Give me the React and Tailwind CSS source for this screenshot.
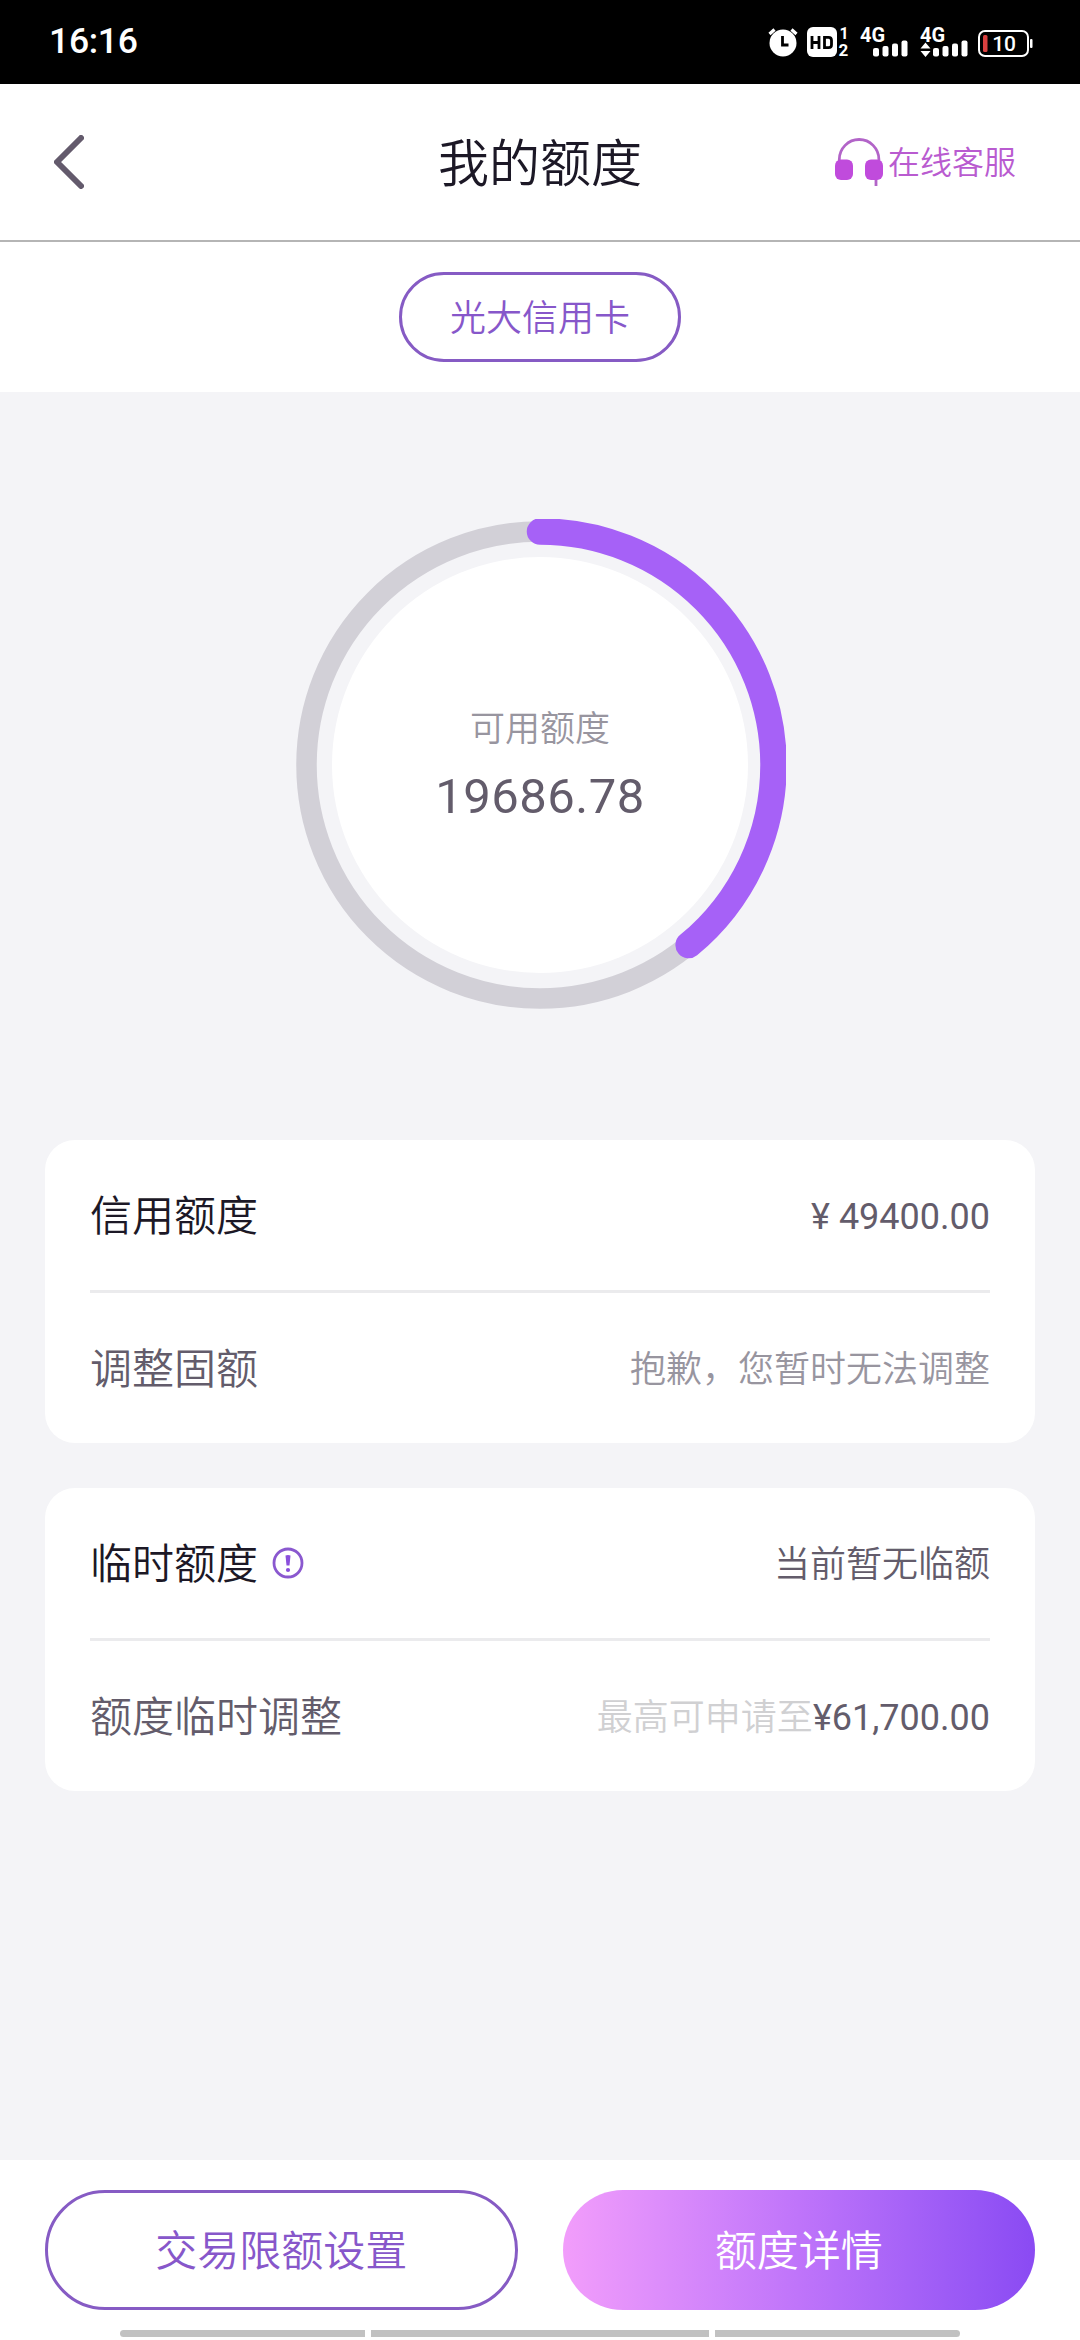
import clsx from "clsx";

function SignalBars() {
  return (
    <>
      <rect x="13" y="21" width="6" height="8.5" rx="2" />
      <rect x="22.5" y="19" width="6" height="10.5" rx="2" />
      <rect x="32" y="16.5" width="6" height="13" rx="2" />
      <rect x="41.5" y="13.5" width="6" height="16" rx="2" />
    </>
  );
}

function StatusBar() {
  return (
    <div className="flex h-[84px] items-center justify-between bg-black pr-[47px] pl-[49px] text-white">
      <span className="text-[35.5px] leading-none font-medium tracking-[-0.3px]">
        16:16
      </span>
      <div className="flex h-[30px] items-start">
        <svg width="30" height="30" viewBox="0 0 30 30" fill="none">
          <circle cx="15" cy="16" r="13.5" fill="#fff" />
          <path d="M1.5 7 6.500 2.500M28.5 7 23.500 2.500" stroke="#fff" strokeWidth="3.200" />
          <path d="M14.5 9v9h6" stroke="#000" strokeWidth="2.800" />
        </svg>
        <svg width="44" height="30" viewBox="0 0 44 30" className="ml-[9px] overflow-visible">
          <rect x="0" y="0" width="30" height="30" rx="6" fill="#fff" />
          <path
            d="M5 9v13M12 9v13M5 15.500h7M17.500 10.300h4q3 0 3 3v4.400q0 3-3 3h-4z"
            fill="none"
            stroke="#000"
            strokeWidth="2.800"
          />
          <text x="32.500" y="12" fontSize="16" fontWeight="700" fill="#fff">
            1
          </text>
          <text x="31.500" y="29" fontSize="17" fontWeight="700" fill="#fff">
            2
          </text>
        </svg>
        <svg
          width="48"
          height="30"
          viewBox="0 0 48 30"
          className="ml-[9px] overflow-visible"
          fill="#fff"
        >
          <text x="0" y="14.500" fontSize="20" fontWeight="700">
            4G
          </text>
          <SignalBars />
        </svg>
        <svg
          width="48"
          height="30"
          viewBox="0 0 48 30"
          className="ml-[12px] overflow-visible"
          fill="#fff"
        >
          <text x="0" y="14.500" fontSize="20" fontWeight="700">
            4G
          </text>
          <path d="M5.500 15.500 10.500 21.500H.500zM5.500 30 .500 24h10z" />
          <SignalBars />
        </svg>
        <svg width="55" height="30" viewBox="0 0 55 30" className="ml-[10px]">
          <rect x="1" y="4" width="49" height="25" rx="6" fill="none" stroke="#fff" strokeWidth="2" />
          <rect x="52" y="12" width="2.500" height="9" rx="1" fill="#fff" />
          <rect x="5" y="8" width="4.500" height="17" rx="1.500" fill="#d9403f" />
          <text x="14.200" y="24" fontSize="21" fontWeight="500" fill="#fff">
            10
          </text>
        </svg>
      </div>
    </div>
  );
}

function Header() {
  return (
    <header className="grid h-[158px] grid-cols-3 items-center border-b-2 border-[#b5b5b5] bg-white">
      <button type="button" className="ml-[54px] justify-self-start">
        <svg width="30" height="54" viewBox="0 0 30 54" fill="none">
          <path
            d="M27 3 3 27l24 24"
            stroke="#635a6c"
            strokeWidth="6"
            strokeLinecap="round"
            strokeLinejoin="round"
          />
        </svg>
      </button>
      <h1 className="pt-[4px] text-center text-[51px] leading-none font-[350] text-[#1c1826]">
        我的额度
      </h1>
      <button type="button" className="mr-[64px] flex items-center gap-[5px] justify-self-end">
        <svg width="48" height="48" viewBox="0 0 48 48">
          <path
            d="M4.300 24v-2.500a19.800 20 0 0 1 39.600 0V24M41 40v8"
            fill="none"
            stroke="#b264c8"
            strokeWidth="2.800"
          />
          <rect x="0" y="21.500" width="18" height="20.500" rx="6" fill="#c04bdc" />
          <rect x="30" y="21.500" width="18" height="20.500" rx="6" fill="#c04bdc" />
        </svg>
        <span className="pt-[2px] text-[32px] leading-none font-[350] text-[#b95bd0]">
          在线客服
        </span>
      </button>
    </header>
  );
}

function LimitRing() {
  const radius = 233.5;
  const length = 2 * Math.PI * radius;

  return (
    <div className="mt-[127px] grid place-items-center">
      <svg
        width="492"
        height="492"
        viewBox="0 0 492 492"
        fill="none"
        className="col-start-1 row-start-1"
      >
        <circle cx="246" cy="246" r="208" fill="#fff" />
        <circle cx="246" cy="246" r={radius} stroke="#d2d0d7" strokeWidth="20.500" />
        <circle
          cx="246"
          cy="246"
          r={radius}
          stroke="#a661f7"
          strokeWidth="26.500"
          strokeLinecap="round"
          strokeDasharray={`${length * 0.39} ${length}`}
          transform="rotate(-90 246 246)"
        />
      </svg>
      <div className="col-start-1 row-start-1 flex flex-col items-center pt-[6px]">
        <span className="text-[35px] leading-[50px] font-[350] text-[#98959f]">可用额度</span>
        <span className="mt-[8px] text-[49px] leading-[68px] tracking-[0.5px] text-[#635c6b]">
          19686.78
        </span>
      </div>
    </div>
  );
}

function Row({ label, muted, icon, children }) {
  return (
    <div className="flex h-[150px] items-center justify-between">
      <div className="flex items-center">
        <span
          className={clsx(
            "pt-[3px] text-[42px] leading-none font-[350]",
            muted ? "text-[#635c6b]" : "text-[#1c1826]"
          )}
        >
          {label}
        </span>
        {icon}
      </div>
      <span className="pt-[3px] text-[36px] leading-none text-[#635c6b]">{children}</span>
    </div>
  );
}

function Card({ children }) {
  return <section className="rounded-[30px] bg-white px-[45px]">{children}</section>;
}

function Divider() {
  return <div className="h-[3px] bg-[#ebebed]" />;
}

function NoticeIcon() {
  return (
    <svg width="32" height="32" viewBox="0 0 32 32" className="ml-[14px]">
      <circle cx="16" cy="16" r="14" fill="none" stroke="#8a58cf" strokeWidth="2.800" />
      <path d="M13.500 8.500q2.500-1.200 5 0l-1 10h-3z" fill="#8a4fdc" />
      <circle cx="16" cy="23" r="2.100" fill="#8a4fdc" />
    </svg>
  );
}

function Footer() {
  return (
    <footer className="flex h-[180px] flex-col bg-white">
      <div className="grid grid-cols-2 gap-[45px] px-[45px] pt-[30px] text-[42px] leading-none font-[350]">
        <button
          type="button"
          className="h-[120px] rounded-full border-3 border-[#865bc4] pt-[3px] text-[#8757ca]"
        >
          交易限额设置
        </button>
        <button
          type="button"
          className="h-[120px] rounded-full bg-linear-to-r from-[#f29dfb] via-[#bf74fa] to-[#8a4af3] pt-[3px] text-white"
        >
          额度详情
        </button>
      </div>
      <div className="mt-[20px] flex justify-center gap-[6px]">
        <div className="h-[7px] w-[245px] rounded-l-full bg-[#c1c1c1]" />
        <div className="h-[7px] w-[338px] bg-[#c1c1c1]" />
        <div className="h-[7px] w-[245px] rounded-r-full bg-[#c1c1c1]" />
      </div>
    </footer>
  );
}

export default function App() {
  return (
    <div className="flex h-[2340px] w-[1080px] flex-col bg-[#f4f4f7] font-[Roboto,'Noto_Sans_CJK_SC',sans-serif]">
      <StatusBar />
      <Header />

      <div className="flex h-[150px] items-center justify-center bg-white">
        <button
          type="button"
          className="h-[90px] w-[282px] rounded-full border-3 border-[#865bc4] pt-[3px] text-[36px] leading-none font-[350] text-[#8757ca]"
        >
          光大信用卡
        </button>
      </div>

      <main className="flex flex-1 flex-col">
        <LimitRing />

        <div className="mt-[129px] flex flex-col gap-[45px] px-[45px]">
          <Card>
            <Row label="信用额度">¥ 49400.00</Row>
            <Divider />
            <Row label="调整固额" muted>
              <span className="font-[350] text-[#98959f]">抱歉，您暂时无法调整</span>
            </Row>
          </Card>
          <Card>
            <Row label="临时额度" icon={<NoticeIcon />}>
              <span className="font-[350]">当前暂无临额</span>
            </Row>
            <Divider />
            <Row label="额度临时调整" muted>
              <span className="font-[350] text-[#d0d0d2]">最高可申请至</span>¥61,700.00
            </Row>
          </Card>
        </div>
      </main>

      <Footer />
    </div>
  );
}
